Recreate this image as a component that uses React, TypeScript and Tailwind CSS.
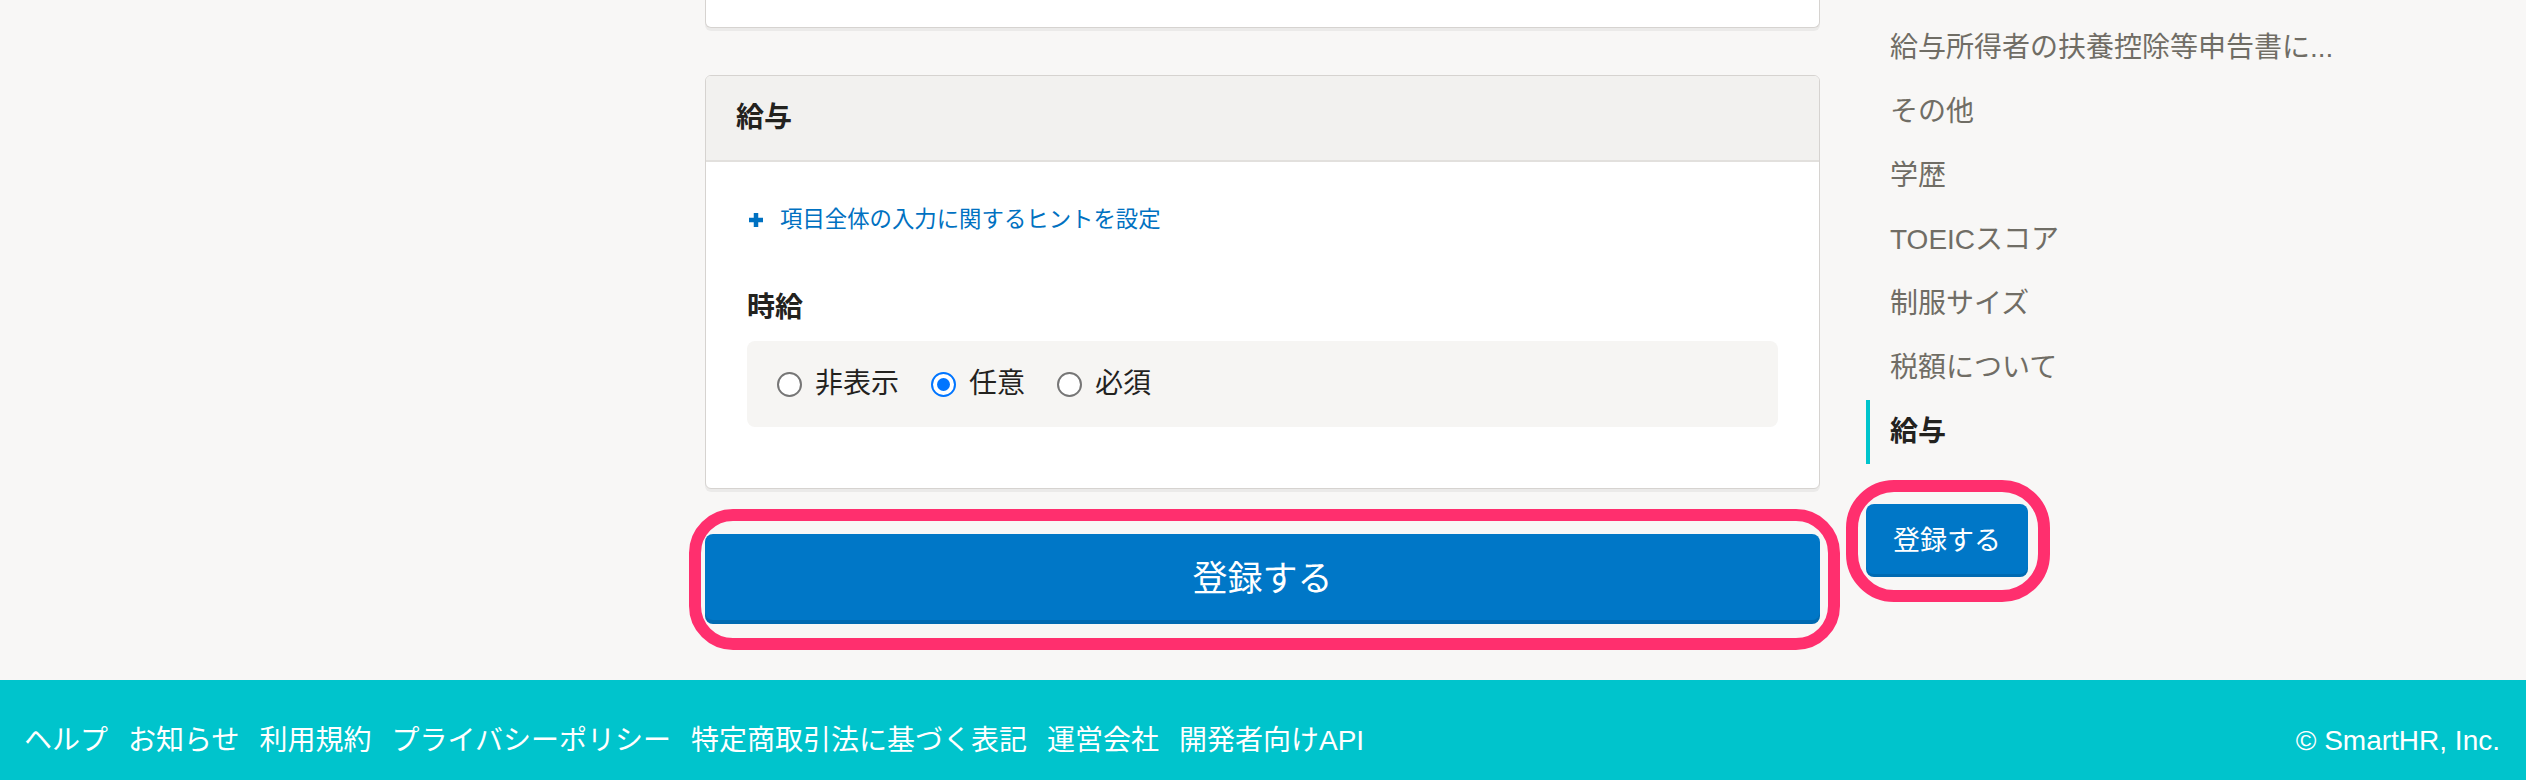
import React from "react";

const sideItems = [
  "給与所得者の扶養控除等申告書に...",
  "その他",
  "学歴",
  "TOEICスコア",
  "制服サイズ",
  "税額について",
  "給与",
];

const footerLinks = [
  "ヘルプ",
  "お知らせ",
  "利用規約",
  "プライバシーポリシー",
  "特定商取引法に基づく表記",
  "運営会社",
  "開発者向けAPI",
];

function Radio({ label, checked }: { label: string; checked?: boolean }) {
  return (
    <label className="flex items-center gap-[13px]">
      {checked ? (
        <span className="w-[25px] h-[25px] rounded-full border-2 border-[#0075ff] bg-white flex items-center justify-center">
          <span className="w-[13px] h-[13px] rounded-full bg-[#0075ff]" />
        </span>
      ) : (
        <span className="w-[25px] h-[25px] rounded-full border-2 border-[#767676] bg-white" />
      )}
      <span>{label}</span>
    </label>
  );
}

export default function App() {
  return (
    <div className="min-h-screen overflow-hidden bg-[#f8f7f6] text-[#23221e] font-['Liberation_Sans','Noto_Sans_CJK_JP',sans-serif]">
      <div className="flex gap-[46px] pl-[705px]">
        {/* Form column */}
        <main className="w-[1115px] flex flex-col">
          {/* bottom of previous card */}
          <div className="h-[28px] bg-white border-x border-b border-[#d6d3d0] rounded-b-[6px] shadow-[0_3px_0_rgba(0,0,0,0.05)]" />

          <section className="mt-[47px] bg-white border border-[#d6d3d0] rounded-[6px] shadow-[0_3px_0_rgba(0,0,0,0.05)] overflow-hidden">
            <div className="h-[86px] flex items-center px-[30px] bg-[#f2f1ef] border-b-2 border-[#e2e0dd]">
              <h2 className="text-[28px] leading-[36px] font-bold">給与</h2>
            </div>
            <div className="px-[41px] pt-[40px] pb-[61px]">
              <button className="flex items-center gap-[17px] text-[22.4px] leading-[36px] text-[#0071c1]">
                <svg width="14" height="14" viewBox="0 0 14 14" className="ml-[2px]" fill="#0071c1">
                  <path d="M4.75 0h4.5v4.75H14v4.5H9.25V14h-4.5V9.25H0v-4.5h4.75z" />
                </svg>
                項目全体の入力に関するヒントを設定
              </button>
              <h3 className="mt-[52px] text-[28px] leading-[36px] font-bold">時給</h3>
              <div className="mt-[15px] h-[86px] rounded-[8px] bg-[#f6f5f3] px-[30px] flex items-center gap-[32px] text-[28px] leading-[36px]">
                <Radio label="非表示" />
                <Radio label="任意" checked />
                <Radio label="必須" />
              </div>
            </div>
          </section>

          <div className="relative mt-[45px] mb-[56px]">
            <button className="w-full h-[90px] rounded-[8px] bg-[#0077c7] text-white text-[35px] leading-[40px] shadow-[inset_0_-4px_0_rgba(0,0,0,0.1)]">
              登録する
            </button>
            <div className="pointer-events-none absolute -left-[16px] -right-[20px] -top-[25px] -bottom-[26px] border-[12px] border-[#ff2f6e] rounded-[44px]" />
          </div>
        </main>

        {/* Section nav */}
        <aside className="w-[500px] pt-[16px]">
          <ul>
            {sideItems.map((item, i) => {
              const active = i === sideItems.length - 1;
              return (
                <li
                  key={item}
                  className={
                    active
                      ? "h-[64px] flex items-center pl-[20px] border-l-4 border-[#00c4cc] text-[28px] font-bold text-[#23221e] whitespace-nowrap"
                      : "h-[64px] flex items-center pl-[20px] border-l-4 border-transparent text-[28px] text-[#706d65] whitespace-nowrap"
                  }
                >
                  {item}
                </li>
              );
            })}
          </ul>
          <div className="relative mt-[40px] w-[162px]">
            <button className="w-[162px] h-[73px] rounded-[8px] bg-[#0077c7] text-white text-[27px] leading-[36px] shadow-[inset_0_-3px_0_rgba(0,0,0,0.1)]">
              登録する
            </button>
            <div className="pointer-events-none absolute -left-[20px] -right-[22px] -top-[24px] -bottom-[25px] border-[12px] border-[#ff2f6e] rounded-[48px]" />
          </div>
        </aside>
      </div>

      <footer className="bg-[#00c4cc] text-white flex justify-between pl-[24px] pr-[26px] pt-[43px] pb-[41px] text-[28px] leading-[36px]">
        <nav className="flex gap-[20px]">
          {footerLinks.map((l) => (
            <a key={l} href="#">
              {l}
            </a>
          ))}
        </nav>
        <span>© SmartHR, Inc.</span>
      </footer>
    </div>
  );
}
